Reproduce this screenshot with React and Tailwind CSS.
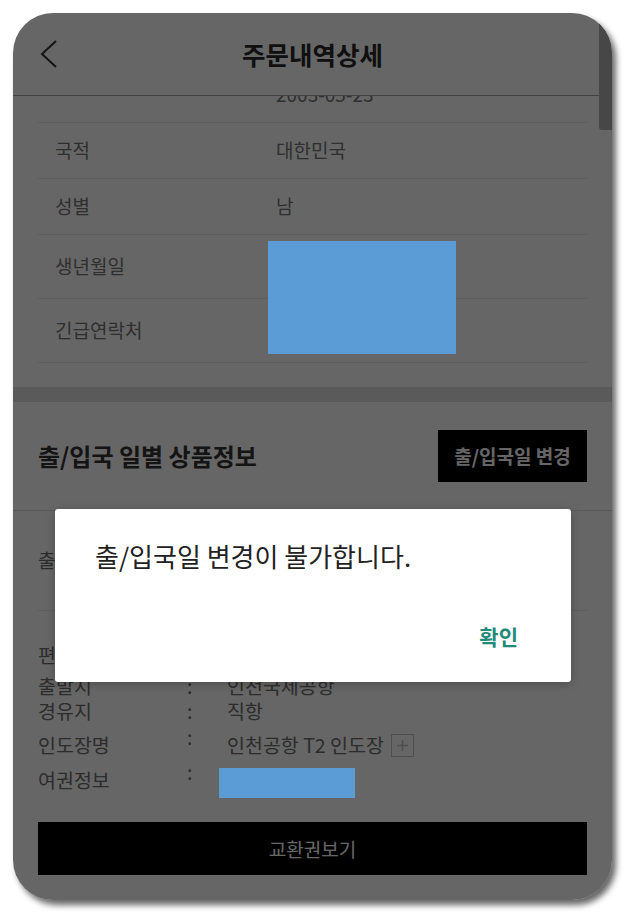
export default function App() {
  const rows = [
    { label: "", value: "2003-05-23", h: "h-[56px]" },
    { label: "국적", value: "대한민국", h: "h-[56px]" },
    { label: "성별", value: "남", h: "h-[56px]" },
    { label: "생년월일", value: "", h: "h-[64px]" },
    { label: "긴급연락처", value: "", h: "h-[64px]" },
  ];
  return (
    <div className="w-[636px] h-[923px] bg-white pt-[13px] pl-[13px] font-['Noto_Sans_CJK_KR','Noto_Sans',sans-serif]">
      <div className="relative w-[599px] h-[887px] rounded-[40px] overflow-hidden bg-white shadow-[4px_5px_6px_rgba(0,0,0,0.6)] flex flex-col">
        <header className="relative z-10 h-[83px] shrink-0 flex items-center border-b border-[#a8a8a8] bg-white">
          <div className="w-[60px] pl-[27px] flex items-center">
            <svg width="17" height="28" viewBox="0 0 17 28">
              <path d="M16 1 L2 14 L16 27" fill="none" stroke="#333" strokeWidth="2" />
            </svg>
          </div>
          <h1 className="flex-1 text-center text-[25.5px] leading-[32px] font-bold text-[#2a2a2a]">주문내역상세</h1>
          <div className="w-[60px]" />
        </header>

        <div className="flex-1 overflow-hidden">
          <div className="-mt-[29px]">
            <div className="px-[25px] pb-[24px]">
              {rows.map((r, i) => (
                <div key={i} className={`${r.h} flex border-b border-[#ebebeb] text-[19px] text-[#777]`}>
                  <div className="w-[222px] pl-[17px] flex items-center">{r.label}</div>
                  <div className="flex-1 pl-[16px] flex items-center">{r.value}</div>
                </div>
              ))}
            </div>
            <div className="h-[15px] bg-[#e2e2e2]" />

            <div className="px-[25px] py-[28px] flex items-center justify-between border-b border-[#dcdcdc]">
              <h2 className="text-[24px] leading-[30px] font-bold text-[#333]">출/입국 일별 상품정보</h2>
              <div className="w-[149px] h-[52px] bg-black text-white text-[19px] font-bold flex items-center justify-center">출/입국일 변경</div>
            </div>

            <div className="px-[25px]">
              <div className="h-[100px] border-b border-[#ebebeb] flex items-center text-[19px] text-[#6e6e6e]">
                출국일 2023-06-01
              </div>
            </div>

            <div className="px-[25px] pt-[32px] text-[19.5px] leading-[24px] text-[#6e6e6e]">
              <div className="flex">
                <div className="w-[149px]">편명</div>
                <div className="w-[40px]">:</div>
                <div>KE 0000</div>
              </div>
              <div className="flex mt-[7px]">
                <div className="w-[149px]">출발지</div>
                <div className="w-[40px]">:</div>
                <div>인천국제공항</div>
              </div>
              <div className="flex mt-[1px]">
                <div className="w-[149px]">경유지</div>
                <div className="w-[40px]">:</div>
                <div>직항</div>
              </div>
              <div className="flex mt-[10px]">
                <div className="w-[149px]">인도장명</div>
                <div className="w-[40px] -mt-[8px]">:</div>
                <div className="flex items-center">
                  인천공항 T2 인도장
                  <span className="ml-[7px] w-[23px] h-[23px] border border-[#c4c4c4] flex items-center justify-center">
                    <svg width="13" height="13" viewBox="0 0 13 13">
                      <path d="M6.5 1 V12 M1 6.5 H12" stroke="#c4c4c4" strokeWidth="1.5" />
                    </svg>
                  </span>
                </div>
              </div>
              <div className="flex mt-[11px]">
                <div className="w-[149px]">여권정보</div>
                <div className="w-[40px] -mt-[8px]">:</div>
                <div className="h-[24px]" />
              </div>
              <div className="mt-[30px] h-[53px] bg-black text-white text-[19px] flex items-center justify-center">교환권보기</div>
            </div>
          </div>
        </div>

        <div className="absolute inset-0 z-20 bg-black/60" />

        <div className="absolute z-30 right-0 top-0 w-[13px] h-[117px] bg-[#474747] rounded-bl-[3px]" />

        <div className="absolute z-30 left-[255px] top-[228px] w-[188px] h-[113px] bg-[#5b9bd6]" />
        <div className="absolute z-30 left-[206px] top-[755px] w-[136px] h-[30px] bg-[#5b9bd6]" />

        <div className="absolute z-30 left-[42px] top-[496px] w-[516px] h-[173px] bg-white rounded-[3px] shadow-[0_2px_8px_rgba(0,0,0,0.25)]">
          <p className="pl-[40px] pt-[30px] text-[26px] leading-[34px] text-[#222]">출/입국일 변경이 불가합니다.</p>
          <div className="absolute right-[53px] top-[112px] text-[21px] leading-[30px] font-bold text-[#1f8b78]">확인</div>
        </div>
      </div>
    </div>
  );
}
